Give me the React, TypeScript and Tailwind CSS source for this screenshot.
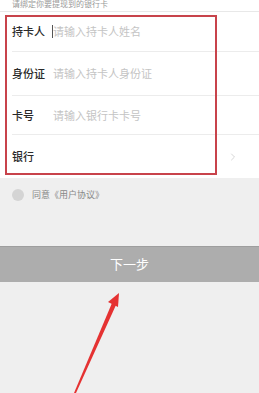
import React from 'react';
import { ChevronRight } from 'lucide-react';

const font = { fontFamily: '"Noto Sans CJK SC", "Noto Sans", sans-serif' };

interface Row {
  label: string;
  placeholder?: string;
  h: string;
  cursor?: boolean;
  arrow?: boolean;
}

const rows: Row[] = [
  { label: '持卡人', placeholder: '请输入持卡人姓名', h: 'h-[40px]', cursor: true },
  { label: '身份证', placeholder: '请输入持卡人身份证', h: 'h-[44px]' },
  { label: '卡号', placeholder: '请输入银行卡卡号', h: 'h-[39px]' },
  { label: '银行', h: 'h-[43px]', arrow: true },
];

export default function App() {
  return (
    <div className="relative w-[259px] h-[393px] overflow-hidden bg-[#efefef]" style={font}>
      {/* header hint, cut off at top */}
      <div className="bg-white h-[12px] border-b border-[#e8e8e8] overflow-hidden pl-3">
        <p className="text-[8px] leading-[8px] text-[#999]">请绑定你要提现到的银行卡</p>
      </div>

      <div className="bg-white">
        {rows.map((r, i) => (
          <div key={i} className="pl-3">
            <div
              className={`${r.h} flex items-center pr-5 ${i < rows.length - 1 ? 'border-b border-[#ececec]' : ''}`}
            >
              <span className="w-[41px] text-[11px] font-medium text-[#2a2a2a]">{r.label}</span>
              {r.cursor && <span className="w-px h-[13px] bg-[#555] -ml-px" />}
              {r.placeholder && <span className="text-[11px] text-[#c4c4c4]">{r.placeholder}</span>}
              {r.arrow && <ChevronRight size={12} strokeWidth={1.5} className="ml-auto text-[#c8c8c8]" />}
            </div>
          </div>
        ))}
      </div>

      <div className="flex items-center gap-[8px] pl-3 mt-[10px]">
        <span className="w-[12px] h-[12px] rounded-full bg-[#d4d4d4]" />
        <span className="text-[9px] text-[#888]">同意《用户协议》</span>
      </div>

      <button className="mt-[44px] w-full h-[36px] bg-[#adadad] border-t border-[#9e9e9e] text-white text-[13px] flex items-center justify-center">
        下一步
      </button>

      {/* annotation box */}
      <div className="absolute left-[5px] top-[15px] w-[212px] h-[160px] border-2 border-[#c8434b] pointer-events-none" />

      {/* annotation arrow */}
      <svg className="absolute left-0 top-0 pointer-events-none" width="259" height="393" viewBox="0 0 259 393">
        <polygon points="74,393 76,393 116,305 112,303" fill="#e53232" />
        <polygon points="119,293 108,302 118,307" fill="#e53232" />
      </svg>
    </div>
  );
}
